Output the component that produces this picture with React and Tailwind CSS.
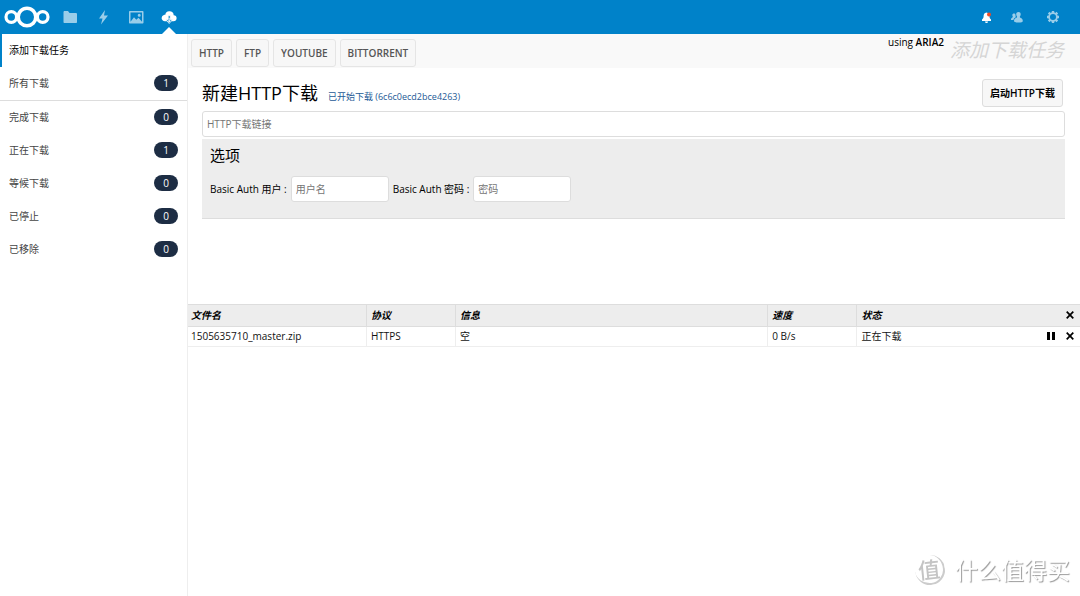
import React, { useState } from 'react';

const apps = [
    { name: '文件', icon: <path d="M1.500 3.200c0-.7.5-1.200 1.200-1.200H6l1.500 2h6.300c.7 0 1.200.5 1.200 1.200V13c0 .6-.4 1-1 1H2.500c-.6 0-1-.4-1-1z" /> },
    { name: '动态', icon: <path d="M10 1 4 9.500h3.500L6 15.500l7-9H9z" /> },
    {
        name: '图库',
        icon: (
            <path
                fillRule="evenodd"
                d="M2 2h12.500c.6 0 1 .4 1 1v10.500c0 .6-.4 1-1 1H2c-.6 0-1-.4-1-1V3c0-.6.4-1 1-1zM2.500 3.500v9.300l3.500-4.600 2.300 2.600 2.200-2 3.500 4V3.500zm8.700 1.200a1.500 1.500 0 1 1 0 3 1.500 1.500 0 0 1 0-3z"
            />
        ),
    },
];

const filters = [
    { name: '完成下载', count: 0 },
    { name: '正在下载', count: 1 },
    { name: '等候下载', count: 0 },
    { name: '已停止', count: 0 },
    { name: '已移除', count: 0 },
];

const providers = ['HTTP', 'FTP', 'YOUTUBE', 'BITTORRENT'];

const downloads = [
    { file: '1505635710_master.zip', protocol: 'HTTPS', info: '空', speed: '0 B/s', status: '正在下载' },
];

const Logo = () => (
    <svg className="block h-6 w-[46px]" viewBox="0 0 46 24" fill="none" stroke="#fff" strokeWidth="3.200">
        <circle cx="23" cy="12" r="8.800" strokeWidth="3.600" />
        <circle cx="7.300" cy="12" r="5.300" />
        <circle cx="38.700" cy="12" r="5.300" />
    </svg>
);

const CloudIcon = () => (
    <svg className="h-4 w-4" viewBox="0 0 16 16">
        <path fill="#fff" d="M8.500 2.200a4 4 0 0 0-4.200 3.500 3 3 0 0 0-1 0A3.500 3.500 0 0 0 .6 9c0 1.900 1.500 3.300 3.300 3.300h8.600c1.800 0 3.100-1.300 3.100-3a3.100 3.100 0 0 0-2.900-3.100 4 4 0 0 0-4.200-4z" />
        <path fill="#0082c9" stroke="#fff" strokeWidth=".8" d="M7.200 6.500h2v4h2.300l-3.300 4-3.300-4h2.300z" />
        <path fill="#fff" d="M7.800 9h.8v2.500h1.200l-1.600 2-1.600-2h1.200z" />
    </svg>
);

const BellIcon = () => (
    <svg className="h-4 w-4" viewBox="0 0 16 16">
        <path fill="#fff" d="M8.500 3.500C6.300 3.800 5.600 5.500 5.600 7.300c0 1.700-.5 2-1.600 3.200V12h9v-1.500c-1.200-1.200-1.500-1.500-1.500-3.200 0-1.800-1-3.500-3-3.800zM7 12.500a1.500 1.500 0 0 0 3 0z" />
        <circle cx="11" cy="5.500" r="2" fill="#f04a24" />
    </svg>
);

const ContactsIcon = () => (
    <svg className="h-4 w-4 opacity-60" viewBox="0 0 16 16" fill="#fff">
        <path d="M9.500 3c1.300 0 2.200.9 2.200 2.200 0 1-.3 1.700-.8 2.400-.2.600 0 .9.600 1.200 1.400.6 2.300 1.500 2.300 3.100 0 1-1.500 1.600-4.300 1.600S5 12.900 5 11.900c0-1.600 1-2.500 2.400-3.100.6-.3.800-.6.600-1.200-.5-.7-.8-1.400-.8-2.400C7.200 3.900 8.200 3 9.500 3z" />
        <path d="M5 4.500c-1 0-1.700.7-1.700 1.600 0 .6.2 1 .5 1.500 0 .4 0 .6-.4.800C2.200 8.900 2 9.600 2 10.900h2.400c.4-1.200 1.200-2 2.400-2.600-.1-.8-.3-1.400-.3-2.300C6.500 5.200 6 4.500 5 4.500z" />
    </svg>
);

const GearIcon = () => (
    <svg className="h-4 w-4 opacity-60" viewBox="0 0 16 16" fill="none" stroke="#fff">
        <circle cx="8" cy="8" r="3.900" strokeWidth="1.800" />
        <path strokeWidth="2.400" d="M8 2v2M8 12v2M2 8h2M12 8h2M3.700 3.700l1.300 1.300M11 11l1.300 1.300M3.700 12.300 5 11M11 5l1.300-1.300" />
    </svg>
);

const CloseIcon = () => (
    <svg className="h-2 w-2" viewBox="0 0 8 8" stroke="#000" strokeWidth="1.700">
        <path d="M.7.7l6.600 6.600M7.300.7.7 7.300" />
    </svg>
);

const PauseIcon = () => (
    <svg className="h-2 w-2" viewBox="0 0 8 8">
        <path d="M0 0h3v8H0zM5 0h3v8H5z" />
    </svg>
);

const Badge = ({ count }) => (
    <span className="flex h-4 w-6 items-center justify-center rounded-full bg-[#1d2d44] text-[10px] text-white">{count}</span>
);

const App = () => {
    const [provider, setProvider] = useState('HTTP');
    const [link, setLink] = useState('');
    const [user, setUser] = useState('');
    const [password, setPassword] = useState('');

    const inputStyle = 'rounded-[3px] border border-[#ddd] bg-white px-1 text-[10px] text-[#333] outline-none placeholder:text-[#757575]';
    const navStyle = 'flex h-[33px] items-center justify-between px-[9px] pb-0.5 text-[#444]';
    const headStyle = 'border-l border-[#ddd] px-1 pb-0.5 first:border-l-0 first:pl-[3px]';
    const cellStyle = 'border-l border-[#eee] px-1 pb-0.5 first:border-l-0 first:pl-[3px]';

    return (
        <div className="flex min-h-screen flex-col bg-white font-['Open_Sans','Noto_Sans_CJK_SC',sans-serif] text-[10px] leading-4 text-black">
            <header className="flex h-[34px] items-center justify-between bg-[#0082c9] pr-[19px] pl-1">
                <nav className="flex h-full items-center">
                    <a href="#home" aria-label="首页"><Logo /></a>
                    <div className="ml-3 flex h-full gap-[17px]">
                        {apps.map((app) => (
                            <a key={app.name} href="#app" aria-label={app.name} className="flex items-center opacity-60">
                                <svg className="h-4 w-4" viewBox="0 0 16 16" fill="#fff">{app.icon}</svg>
                            </a>
                        ))}
                        <a href="#downloader" aria-label="下载" className="relative flex items-center">
                            <CloudIcon />
                            <span className="absolute bottom-0 left-1/2 -translate-x-1/2 border-x-[7px] border-b-[7px] border-x-transparent border-b-white" />
                        </a>
                    </div>
                </nav>
                <div className="flex items-center">
                    <button type="button" aria-label="通知" className="mr-[15px]"><BellIcon /></button>
                    <button type="button" aria-label="联系人" className="mr-5"><ContactsIcon /></button>
                    <button type="button" aria-label="设置"><GearIcon /></button>
                </div>
            </header>

            <div className="flex flex-1">
                <aside className="w-[188px] shrink-0 border-r border-[#eee]">
                    <ul>
                        <li>
                            <a href="#add" className="flex h-[33px] items-center border-l-2 border-[#0082c9] pb-0.5 pl-[7px]">添加下载任务</a>
                        </li>
                        <li className="border-b border-[#ddd]">
                            <a href="#all" className={navStyle}>所有下载<Badge count={1} /></a>
                        </li>
                        {filters.map((item) => (
                            <li key={item.name}>
                                <a href="#filter" className={navStyle}>{item.name}<Badge count={item.count} /></a>
                            </li>
                        ))}
                    </ul>
                </aside>

                <main className="min-w-0 flex-1">
                    <div className="flex h-[34px] justify-between bg-[#f9f9f9] pr-4 pl-[3px]">
                        <div className="flex items-center gap-1 pt-1">
                            {providers.map((name) => (
                                <button
                                    key={name}
                                    type="button"
                                    onClick={() => setProvider(name)}
                                    className="h-7 rounded-[3px] border border-[#e5e5e5] bg-[#f7f7f7] px-[7px] font-semibold text-[#555]"
                                >
                                    {name}
                                </button>
                            ))}
                        </div>
                        <div className="flex gap-[6px]">
                            <span>using <b className="font-semibold">ARIA2</b></span>
                            <h1 className="text-[19px] leading-[32px] text-[#d5d5d5] italic">添加下载任务</h1>
                        </div>
                    </div>

                    <form onSubmit={(e) => e.preventDefault()} className="min-h-[236px] pt-[11px] pr-[15px] pl-[14px]">
                        <div className="flex items-start justify-between">
                            <div className="flex items-baseline gap-[10px]">
                                <h2 className="text-[18px] leading-7">新建{provider}下载</h2>
                                <span className="text-[9px] text-[#1d5a96]">已开始下载 (6c6c0ecd2bce4263)</span>
                            </div>
                            <button type="submit" className="mr-0.5 h-7 rounded-[3px] border border-[#ddd] bg-[#f7f7f7] px-[7px] font-semibold">
                                启动{provider}下载
                            </button>
                        </div>
                        <input
                            type="text"
                            aria-label={`${provider}下载链接`}
                            value={link}
                            onChange={(e) => setLink(e.target.value)}
                            className={`mt-1 block h-[26px] w-full ${inputStyle}`}
                            placeholder={`${provider}下载链接`}
                        />
                        <div className="mt-0.5 h-20 border-b border-[#ddd] bg-[#ededed] px-2 pt-1">
                            <h3 className="text-[15px] leading-6">选项</h3>
                            <div className="mt-[9px] flex items-center gap-1">
                                <label htmlFor="user">Basic Auth 用户 :</label>
                                <input
                                    id="user"
                                    type="text"
                                    value={user}
                                    onChange={(e) => setUser(e.target.value)}
                                    className={`h-[26px] w-[98px] ${inputStyle}`}
                                    placeholder="用户名"
                                />
                                <label htmlFor="password">Basic Auth 密码 :</label>
                                <input
                                    id="password"
                                    type="password"
                                    value={password}
                                    onChange={(e) => setPassword(e.target.value)}
                                    className={`h-[26px] w-[98px] ${inputStyle}`}
                                    placeholder="密码"
                                />
                            </div>
                        </div>
                    </form>

                    <table className="w-full table-fixed border-collapse text-left">
                        <thead>
                            <tr className="h-[22px] border-y border-[#ddd] bg-[#ededed] italic">
                                <th className={`w-[20%] ${headStyle}`}>文件名</th>
                                <th className={`w-[10%] ${headStyle}`}>协议</th>
                                <th className={`w-[35%] ${headStyle}`}>信息</th>
                                <th className={`w-[10%] ${headStyle}`}>速度</th>
                                <th className={`w-[25%] ${headStyle}`}>
                                    <div className="flex items-center justify-between pr-0.5">
                                        状态
                                        <button type="button" aria-label="全部移除"><CloseIcon /></button>
                                    </div>
                                </th>
                            </tr>
                        </thead>
                        <tbody>
                            {downloads.map((row) => (
                                <tr key={row.file} className="h-5 border-b border-[#eee] text-[#111]">
                                    <td className={cellStyle}>{row.file}</td>
                                    <td className={cellStyle}>{row.protocol}</td>
                                    <td className={cellStyle}>{row.info}</td>
                                    <td className={cellStyle}>{row.speed}</td>
                                    <td className={cellStyle}>
                                        <div className="flex items-center justify-between pr-0.5">
                                            {row.status}
                                            <div className="flex items-center gap-[11px]">
                                                <button type="button" aria-label="暂停"><PauseIcon /></button>
                                                <button type="button" aria-label="移除"><CloseIcon /></button>
                                            </div>
                                        </div>
                                    </td>
                                </tr>
                            ))}
                        </tbody>
                    </table>
                </main>
            </div>

            <div className="fixed right-[10px] bottom-2 flex items-center gap-[10px] text-white">
                <span className="flex h-[30px] w-[30px] -rotate-6 items-center justify-center rounded-full border-r-2 border-b-2 border-[#ccc] text-[22px] font-medium text-[#c4c4c4]">值</span>
                <span className="text-[23px] leading-9 [text-shadow:1px_1px_1px_#999]">什么值得买</span>
            </div>
        </div>
    );
};

export default App;
